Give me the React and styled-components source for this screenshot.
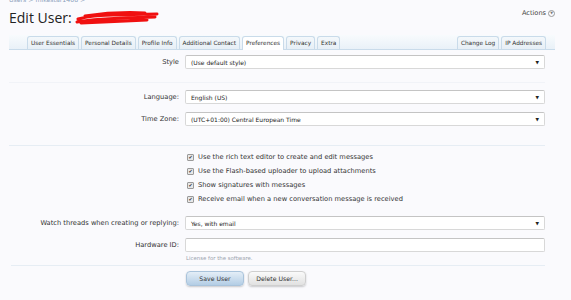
import styled, { createGlobalStyle } from "styled-components";

const GlobalStyle = createGlobalStyle`
  html, body {
    margin: 0;
    padding: 0;
    background: #fafafd;
  }
  body {
    font-family: "DejaVu Sans", Verdana, sans-serif;
    color: #222;
  }
`;

const Page = styled.div`
  width: 571px;
  height: 300px;
  overflow: hidden;
  padding: 0 26px 0 9px;
  box-sizing: border-box;
`;

const Breadcrumb = styled.div`
  margin-top: -4px;
  height: 8px;
  font-size: 6.2px;
  color: #8aa0bb;
`;

const TitleBar = styled.div`
  display: flex;
  align-items: center;
  justify-content: space-between;
  height: 20px;
  margin-top: 3px;
`;

const Title = styled.h1`
  margin: 0;
  display: flex;
  align-items: center;
  font-family: "Open Sans", "DejaVu Sans", sans-serif;
  font-weight: 400;
  font-size: 14px;
  color: #222;
`;

const Actions = styled.div`
  display: flex;
  align-items: center;
  gap: 2px;
  font-size: 6.6px;
  color: #444;
  margin-right: -10px;
  margin-top: -8px;
`;

const ActionsIcon = styled.span`
  width: 5px;
  height: 5px;
  border: 1px solid #999;
  border-radius: 50%;
  display: flex;
  align-items: center;
  justify-content: center;
  font-size: 3.5px;
  color: #777;
`;

const TabBar = styled.div`
  margin-top: 8px;
  margin-right: -10px;
  display: flex;
  justify-content: space-between;
  align-items: flex-end;
  padding: 0 9px 0 18px;
  height: 14px;
  border-bottom: 1px solid #c9dbea;
  background: linear-gradient(to bottom, #f8fbfd, #e9f1f8);
`;

const TabGroup = styled.div`
  display: flex;
  gap: 2px;
`;

const Tab = styled.div`
  font-size: 5.8px;
  padding: 0 3px;
  line-height: 12px;
  border: 1px solid #c9dbea;
  border-bottom: none;
  border-radius: 3px 3px 0 0;
  color: #333;
  margin-bottom: ${({ $active }) => ($active ? "-1px" : "0")};
  background: ${({ $active }) =>
    $active ? "#fff" : "linear-gradient(to bottom, #f4f8fb, #e7eff6)"};
  height: ${({ $active }) => ($active ? "13px" : "12px")};
`;

const Form = styled.div`
  display: flex;
  flex-direction: column;
`;

const Row = styled.div`
  display: grid;
  grid-template-columns: 170px 1fr;
  column-gap: 6px;
  align-items: center;
  margin-top: ${({ $top }) => $top || 0}px;
`;

const Label = styled.div`
  text-align: right;
  font-size: 6.7px;
  color: #333;
`;

const SelectBox = styled.div`
  height: 14px;
  box-sizing: border-box;
  border: 1px solid #d8d8d8;
  border-top-color: #c4c4c4;
  border-radius: 2px;
  background: #fff;
  display: flex;
  align-items: center;
  justify-content: space-between;
  padding: 0 5px;
  font-size: 6px;
  color: #222;
`;

const Arrow = styled.span`
  font-size: 4.5px;
  color: #222;
`;

const TextBox = styled.div`
  height: 14px;
  box-sizing: border-box;
  border: 1px solid #d8d8d8;
  border-top-color: #c4c4c4;
  border-radius: 2px;
  background: #fff;
`;

const Divider = styled.div`
  height: 1px;
  background: ${({ $faint }) => ($faint ? "#f1f3f8" : "#e6edf4")};
  margin-top: ${({ $top }) => $top}px;
  margin-left: ${({ $left }) => $left || 0}px;
`;

const CheckList = styled.div`
  margin-top: 4px;
  margin-left: 178px;
  display: flex;
  flex-direction: column;
`;

const CheckRow = styled.div`
  height: 14px;
  display: flex;
  align-items: center;
  gap: 4px;
  font-size: 6.7px;
  color: #333;
`;

const Box = styled.span`
  width: 5px;
  height: 5px;
  border: 1px solid #9a9a9a;
  background: #e8e8e8;
  border-radius: 1px;
  display: flex;
  align-items: center;
  justify-content: center;
  font-size: 5px;
  line-height: 1;
  color: #333;
`;

const Hint = styled.div`
  margin-left: 177px;
  margin-top: 3px;
  font-size: 5.4px;
  color: #9aa3ad;
`;

const Buttons = styled.div`
  margin-left: 177px;
  margin-top: 5px;
  display: flex;
  gap: 4px;
`;

const Button = styled.div`
  height: 13px;
  line-height: 13px;
  width: ${({ $w }) => $w}px;
  text-align: center;
  font-size: 6.2px;
  color: #333;
  border-radius: 4px;
  border: 1px solid ${({ $primary }) => ($primary ? "#a9c3db" : "#cfcfcf")};
  background: ${({ $primary }) =>
    $primary
      ? "linear-gradient(to bottom, #e4eef7, #b3cde5)"
      : "linear-gradient(to bottom, #fafafa, #e1e1e1)"};
  box-shadow: 0 1px 2px rgba(0, 0, 0, 0.2);
`;

const Scribble = () => (
  <svg width="86" height="16" viewBox="0 0 86 16" style={{ marginLeft: 3, marginTop: 2 }}>
    <path
      d="M3 9 C20 4, 40 5, 82 4 M2 12 C25 8, 55 8, 80 7 M6 13 C30 12, 50 11, 72 10 M10 6 C30 3, 50 2, 70 3"
      stroke="#f01010"
      strokeWidth="3"
      fill="none"
      strokeLinecap="round"
    />
  </svg>
);

const Select = ({ value }) => (
  <SelectBox>
    <span>{value}</span>
    <Arrow>▼</Arrow>
  </SelectBox>
);

const checks = [
  "Use the rich text editor to create and edit messages",
  "Use the Flash-based uploader to upload attachments",
  "Show signatures with messages",
  "Receive email when a new conversation message is received",
];

export default function App() {
  return (
    <>
      <GlobalStyle />
      <Page>
        <Breadcrumb>Users &gt; mikestar1408 &gt;</Breadcrumb>
        <TitleBar>
          <Title>
            Edit User:
            <Scribble />
          </Title>
          <Actions>
            Actions <ActionsIcon>▼</ActionsIcon>
          </Actions>
        </TitleBar>
        <TabBar>
          <TabGroup>
            <Tab>User Essentials</Tab>
            <Tab>Personal Details</Tab>
            <Tab>Profile Info</Tab>
            <Tab>Additional Contact</Tab>
            <Tab $active>Preferences</Tab>
            <Tab>Privacy</Tab>
            <Tab>Extra</Tab>
          </TabGroup>
          <TabGroup>
            <Tab>Change Log</Tab>
            <Tab>IP Addresses</Tab>
          </TabGroup>
        </TabBar>
        <Form>
          <Row $top={5}>
            <Label>Style</Label>
            <Select value="(Use default style)" />
          </Row>
          <Divider $faint $top={13} />
          <Row $top={7}>
            <Label>Language:</Label>
            <Select value="English (US)" />
          </Row>
          <Row $top={8}>
            <Label>Time Zone:</Label>
            <Select value="(UTC+01:00) Central European Time" />
          </Row>
          <Divider $top={19} $left={0} />
          <CheckList>
            {checks.map((c) => (
              <CheckRow key={c}>
                <Box>✔</Box>
                {c}
              </CheckRow>
            ))}
          </CheckList>
          <Row $top={10}>
            <Label>Watch threads when creating or replying:</Label>
            <Select value="Yes, with email" />
          </Row>
          <Row $top={8}>
            <Label>Hardware ID:</Label>
            <TextBox />
          </Row>
          <Hint>License for the software.</Hint>
          <Divider $top={4} $left={2} />
          <Buttons>
            <Button $primary $w={56}>Save User</Button>
            <Button $w={56}>Delete User...</Button>
          </Buttons>
        </Form>
      </Page>
    </>
  );
}
